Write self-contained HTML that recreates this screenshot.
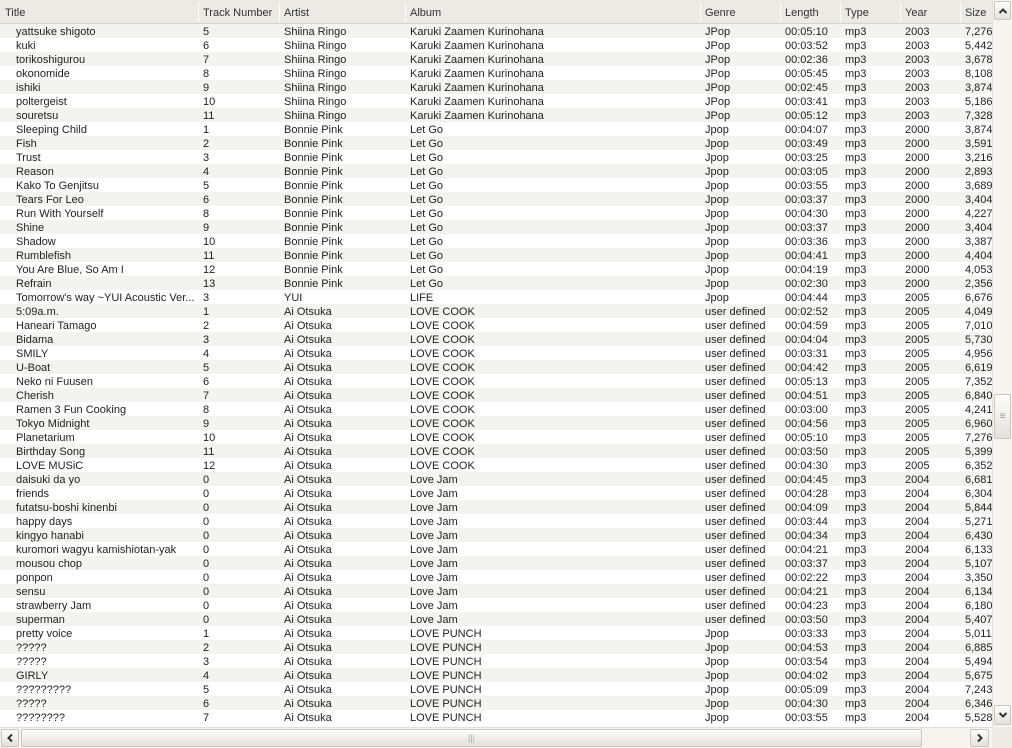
<!DOCTYPE html>
<html><head><meta charset="utf-8">
<style>
*{margin:0;padding:0;box-sizing:border-box}
body{width:1012px;height:748px;overflow:hidden;background:#fff;font-family:"Liberation Sans",sans-serif;font-size:11px;color:#222;position:relative}
#hdr{position:absolute;left:0;top:0;width:992px;height:24px;background:#ebeae4;border-bottom:1px solid #d6d4ca;overflow:hidden}
#hdr span{position:absolute;top:6px;color:#333;font-size:11px;line-height:14px}
#hdr i{position:absolute;top:2px;width:1px;height:20px;background:#c8c6bc;border-right:1px solid #fff}
#list{position:absolute;left:0;top:24px;width:992px;height:703px;overflow:hidden}
.r{position:relative;height:14px;line-height:14px;white-space:nowrap}
.r:nth-child(odd){background:#f3f3f1}
.r span{position:absolute;top:1px;overflow:hidden}
.r span:nth-child(1){left:16px;width:182px}
.r span:nth-child(2){left:203px}
.r span:nth-child(3){left:284px}
.r span:nth-child(4){left:410px}
.r span:nth-child(5){left:705px}
.r span:nth-child(6){left:785px}
.r span:nth-child(7){left:845px}
.r span:nth-child(8){left:905px}
.r span:nth-child(9){left:965px;width:27px}
#vs{position:absolute;left:992px;top:0;width:20px;height:727px;background:#f5f4ef;border-left:1px solid #e0dfd8}
#hs{position:absolute;left:0;top:727px;width:992px;height:21px;background:#f5f4ef;border-top:1px solid #e0dfd8}
.btn{position:absolute;background:linear-gradient(#fdfdfb,#e2e1dc);border:1px solid #c9c8c0;border-radius:2px;color:#333;font-size:10px;text-align:center}
.btn svg{position:absolute;left:50%;top:50%;transform:translate(-50%,-50%)}
#corner{position:absolute;left:992px;top:727px;width:20px;height:21px;background:#ebeae4}
</style></head><body>
<div id="hdr">
<span style="left:5px">Title</span><i style="left:198px"></i>
<span style="left:203px">Track Number</span><i style="left:279px"></i>
<span style="left:284px">Artist</span><i style="left:405px"></i>
<span style="left:410px">Album</span><i style="left:700px"></i>
<span style="left:705px">Genre</span><i style="left:780px"></i>
<span style="left:785px">Length</span><i style="left:840px"></i>
<span style="left:845px">Type</span><i style="left:900px"></i>
<span style="left:905px">Year</span><i style="left:960px"></i>
<span style="left:965px">Size</span>
</div>
<div id="list">
<div class="r"><span>yattsuke shigoto</span><span>5</span><span>Shiina Ringo</span><span>Karuki Zaamen Kurinohana</span><span>JPop</span><span>00:05:10</span><span>mp3</span><span>2003</span><span>7,276</span></div>
<div class="r"><span>kuki</span><span>6</span><span>Shiina Ringo</span><span>Karuki Zaamen Kurinohana</span><span>JPop</span><span>00:03:52</span><span>mp3</span><span>2003</span><span>5,442</span></div>
<div class="r"><span>torikoshigurou</span><span>7</span><span>Shiina Ringo</span><span>Karuki Zaamen Kurinohana</span><span>JPop</span><span>00:02:36</span><span>mp3</span><span>2003</span><span>3,678</span></div>
<div class="r"><span>okonomide</span><span>8</span><span>Shiina Ringo</span><span>Karuki Zaamen Kurinohana</span><span>JPop</span><span>00:05:45</span><span>mp3</span><span>2003</span><span>8,108</span></div>
<div class="r"><span>ishiki</span><span>9</span><span>Shiina Ringo</span><span>Karuki Zaamen Kurinohana</span><span>JPop</span><span>00:02:45</span><span>mp3</span><span>2003</span><span>3,874</span></div>
<div class="r"><span>poltergeist</span><span>10</span><span>Shiina Ringo</span><span>Karuki Zaamen Kurinohana</span><span>JPop</span><span>00:03:41</span><span>mp3</span><span>2003</span><span>5,186</span></div>
<div class="r"><span>souretsu</span><span>11</span><span>Shiina Ringo</span><span>Karuki Zaamen Kurinohana</span><span>JPop</span><span>00:05:12</span><span>mp3</span><span>2003</span><span>7,328</span></div>
<div class="r"><span>Sleeping Child</span><span>1</span><span>Bonnie Pink</span><span>Let Go</span><span>Jpop</span><span>00:04:07</span><span>mp3</span><span>2000</span><span>3,874</span></div>
<div class="r"><span>Fish</span><span>2</span><span>Bonnie Pink</span><span>Let Go</span><span>Jpop</span><span>00:03:49</span><span>mp3</span><span>2000</span><span>3,591</span></div>
<div class="r"><span>Trust</span><span>3</span><span>Bonnie Pink</span><span>Let Go</span><span>Jpop</span><span>00:03:25</span><span>mp3</span><span>2000</span><span>3,216</span></div>
<div class="r"><span>Reason</span><span>4</span><span>Bonnie Pink</span><span>Let Go</span><span>Jpop</span><span>00:03:05</span><span>mp3</span><span>2000</span><span>2,893</span></div>
<div class="r"><span>Kako To Genjitsu</span><span>5</span><span>Bonnie Pink</span><span>Let Go</span><span>Jpop</span><span>00:03:55</span><span>mp3</span><span>2000</span><span>3,689</span></div>
<div class="r"><span>Tears For Leo</span><span>6</span><span>Bonnie Pink</span><span>Let Go</span><span>Jpop</span><span>00:03:37</span><span>mp3</span><span>2000</span><span>3,404</span></div>
<div class="r"><span>Run With Yourself</span><span>8</span><span>Bonnie Pink</span><span>Let Go</span><span>Jpop</span><span>00:04:30</span><span>mp3</span><span>2000</span><span>4,227</span></div>
<div class="r"><span>Shine</span><span>9</span><span>Bonnie Pink</span><span>Let Go</span><span>Jpop</span><span>00:03:37</span><span>mp3</span><span>2000</span><span>3,404</span></div>
<div class="r"><span>Shadow</span><span>10</span><span>Bonnie Pink</span><span>Let Go</span><span>Jpop</span><span>00:03:36</span><span>mp3</span><span>2000</span><span>3,387</span></div>
<div class="r"><span>Rumblefish</span><span>11</span><span>Bonnie Pink</span><span>Let Go</span><span>Jpop</span><span>00:04:41</span><span>mp3</span><span>2000</span><span>4,404</span></div>
<div class="r"><span>You Are Blue, So Am I</span><span>12</span><span>Bonnie Pink</span><span>Let Go</span><span>Jpop</span><span>00:04:19</span><span>mp3</span><span>2000</span><span>4,053</span></div>
<div class="r"><span>Refrain</span><span>13</span><span>Bonnie Pink</span><span>Let Go</span><span>Jpop</span><span>00:02:30</span><span>mp3</span><span>2000</span><span>2,356</span></div>
<div class="r"><span>Tomorrow's way ~YUI Acoustic Ver...</span><span>3</span><span>YUI</span><span>LIFE</span><span>Jpop</span><span>00:04:44</span><span>mp3</span><span>2005</span><span>6,676</span></div>
<div class="r"><span>5:09a.m.</span><span>1</span><span>Ai Otsuka</span><span>LOVE COOK</span><span>user defined</span><span>00:02:52</span><span>mp3</span><span>2005</span><span>4,049</span></div>
<div class="r"><span>Haneari Tamago</span><span>2</span><span>Ai Otsuka</span><span>LOVE COOK</span><span>user defined</span><span>00:04:59</span><span>mp3</span><span>2005</span><span>7,010</span></div>
<div class="r"><span>Bidama</span><span>3</span><span>Ai Otsuka</span><span>LOVE COOK</span><span>user defined</span><span>00:04:04</span><span>mp3</span><span>2005</span><span>5,730</span></div>
<div class="r"><span>SMILY</span><span>4</span><span>Ai Otsuka</span><span>LOVE COOK</span><span>user defined</span><span>00:03:31</span><span>mp3</span><span>2005</span><span>4,956</span></div>
<div class="r"><span>U-Boat</span><span>5</span><span>Ai Otsuka</span><span>LOVE COOK</span><span>user defined</span><span>00:04:42</span><span>mp3</span><span>2005</span><span>6,619</span></div>
<div class="r"><span>Neko ni Fuusen</span><span>6</span><span>Ai Otsuka</span><span>LOVE COOK</span><span>user defined</span><span>00:05:13</span><span>mp3</span><span>2005</span><span>7,352</span></div>
<div class="r"><span>Cherish</span><span>7</span><span>Ai Otsuka</span><span>LOVE COOK</span><span>user defined</span><span>00:04:51</span><span>mp3</span><span>2005</span><span>6,840</span></div>
<div class="r"><span>Ramen 3 Fun Cooking</span><span>8</span><span>Ai Otsuka</span><span>LOVE COOK</span><span>user defined</span><span>00:03:00</span><span>mp3</span><span>2005</span><span>4,241</span></div>
<div class="r"><span>Tokyo Midnight</span><span>9</span><span>Ai Otsuka</span><span>LOVE COOK</span><span>user defined</span><span>00:04:56</span><span>mp3</span><span>2005</span><span>6,960</span></div>
<div class="r"><span>Planetarium</span><span>10</span><span>Ai Otsuka</span><span>LOVE COOK</span><span>user defined</span><span>00:05:10</span><span>mp3</span><span>2005</span><span>7,276</span></div>
<div class="r"><span>Birthday Song</span><span>11</span><span>Ai Otsuka</span><span>LOVE COOK</span><span>user defined</span><span>00:03:50</span><span>mp3</span><span>2005</span><span>5,399</span></div>
<div class="r"><span>LOVE MUSiC</span><span>12</span><span>Ai Otsuka</span><span>LOVE COOK</span><span>user defined</span><span>00:04:30</span><span>mp3</span><span>2005</span><span>6,352</span></div>
<div class="r"><span>daisuki da yo</span><span>0</span><span>Ai Otsuka</span><span>Love Jam</span><span>user defined</span><span>00:04:45</span><span>mp3</span><span>2004</span><span>6,681</span></div>
<div class="r"><span>friends</span><span>0</span><span>Ai Otsuka</span><span>Love Jam</span><span>user defined</span><span>00:04:28</span><span>mp3</span><span>2004</span><span>6,304</span></div>
<div class="r"><span>futatsu-boshi kinenbi</span><span>0</span><span>Ai Otsuka</span><span>Love Jam</span><span>user defined</span><span>00:04:09</span><span>mp3</span><span>2004</span><span>5,844</span></div>
<div class="r"><span>happy days</span><span>0</span><span>Ai Otsuka</span><span>Love Jam</span><span>user defined</span><span>00:03:44</span><span>mp3</span><span>2004</span><span>5,271</span></div>
<div class="r"><span>kingyo hanabi</span><span>0</span><span>Ai Otsuka</span><span>Love Jam</span><span>user defined</span><span>00:04:34</span><span>mp3</span><span>2004</span><span>6,430</span></div>
<div class="r"><span>kuromori wagyu kamishiotan-yak</span><span>0</span><span>Ai Otsuka</span><span>Love Jam</span><span>user defined</span><span>00:04:21</span><span>mp3</span><span>2004</span><span>6,133</span></div>
<div class="r"><span>mousou chop</span><span>0</span><span>Ai Otsuka</span><span>Love Jam</span><span>user defined</span><span>00:03:37</span><span>mp3</span><span>2004</span><span>5,107</span></div>
<div class="r"><span>ponpon</span><span>0</span><span>Ai Otsuka</span><span>Love Jam</span><span>user defined</span><span>00:02:22</span><span>mp3</span><span>2004</span><span>3,350</span></div>
<div class="r"><span>sensu</span><span>0</span><span>Ai Otsuka</span><span>Love Jam</span><span>user defined</span><span>00:04:21</span><span>mp3</span><span>2004</span><span>6,134</span></div>
<div class="r"><span>strawberry Jam</span><span>0</span><span>Ai Otsuka</span><span>Love Jam</span><span>user defined</span><span>00:04:23</span><span>mp3</span><span>2004</span><span>6,180</span></div>
<div class="r"><span>superman</span><span>0</span><span>Ai Otsuka</span><span>Love Jam</span><span>user defined</span><span>00:03:50</span><span>mp3</span><span>2004</span><span>5,407</span></div>
<div class="r"><span>pretty voice</span><span>1</span><span>Ai Otsuka</span><span>LOVE PUNCH</span><span>Jpop</span><span>00:03:33</span><span>mp3</span><span>2004</span><span>5,011</span></div>
<div class="r"><span>?????</span><span>2</span><span>Ai Otsuka</span><span>LOVE PUNCH</span><span>Jpop</span><span>00:04:53</span><span>mp3</span><span>2004</span><span>6,885</span></div>
<div class="r"><span>?????</span><span>3</span><span>Ai Otsuka</span><span>LOVE PUNCH</span><span>Jpop</span><span>00:03:54</span><span>mp3</span><span>2004</span><span>5,494</span></div>
<div class="r"><span>GIRLY</span><span>4</span><span>Ai Otsuka</span><span>LOVE PUNCH</span><span>Jpop</span><span>00:04:02</span><span>mp3</span><span>2004</span><span>5,675</span></div>
<div class="r"><span>?????????</span><span>5</span><span>Ai Otsuka</span><span>LOVE PUNCH</span><span>Jpop</span><span>00:05:09</span><span>mp3</span><span>2004</span><span>7,243</span></div>
<div class="r"><span>?????</span><span>6</span><span>Ai Otsuka</span><span>LOVE PUNCH</span><span>Jpop</span><span>00:04:30</span><span>mp3</span><span>2004</span><span>6,346</span></div>
<div class="r"><span>????????</span><span>7</span><span>Ai Otsuka</span><span>LOVE PUNCH</span><span>Jpop</span><span>00:03:55</span><span>mp3</span><span>2004</span><span>5,528</span></div>
</div>
<div id="vs">
<div class="btn" style="left:1px;top:1px;width:17px;height:19px"><svg width="9" height="6" viewBox="0 0 9 6"><path d="M1 5 L4.5 1.5 L8 5" fill="none" stroke="#333" stroke-width="2"/></svg></div>
<div class="btn" style="left:1px;top:394px;width:17px;height:45px;line-height:43px;color:#999">&#8801;</div>
<div class="btn" style="left:1px;top:705px;width:17px;height:20px"><svg width="9" height="6" viewBox="0 0 9 6"><path d="M1 1 L4.5 4.5 L8 1" fill="none" stroke="#333" stroke-width="2"/></svg></div>
</div>
<div id="hs">
<div class="btn" style="left:1px;top:1px;width:18px;height:18px"><svg width="6" height="9" viewBox="0 0 6 9"><path d="M5 1 L1.5 4.5 L5 8" fill="none" stroke="#333" stroke-width="2"/></svg></div>
<div class="btn" style="left:21px;top:1px;width:901px;height:18px;line-height:16px;color:#aaa;font-size:9px">|||</div>
<div class="btn" style="left:970px;top:1px;width:19px;height:18px"><svg width="6" height="9" viewBox="0 0 6 9"><path d="M1 1 L4.5 4.5 L1 8" fill="none" stroke="#333" stroke-width="2"/></svg></div>
</div>
<div id="corner"></div>
</body></html>
